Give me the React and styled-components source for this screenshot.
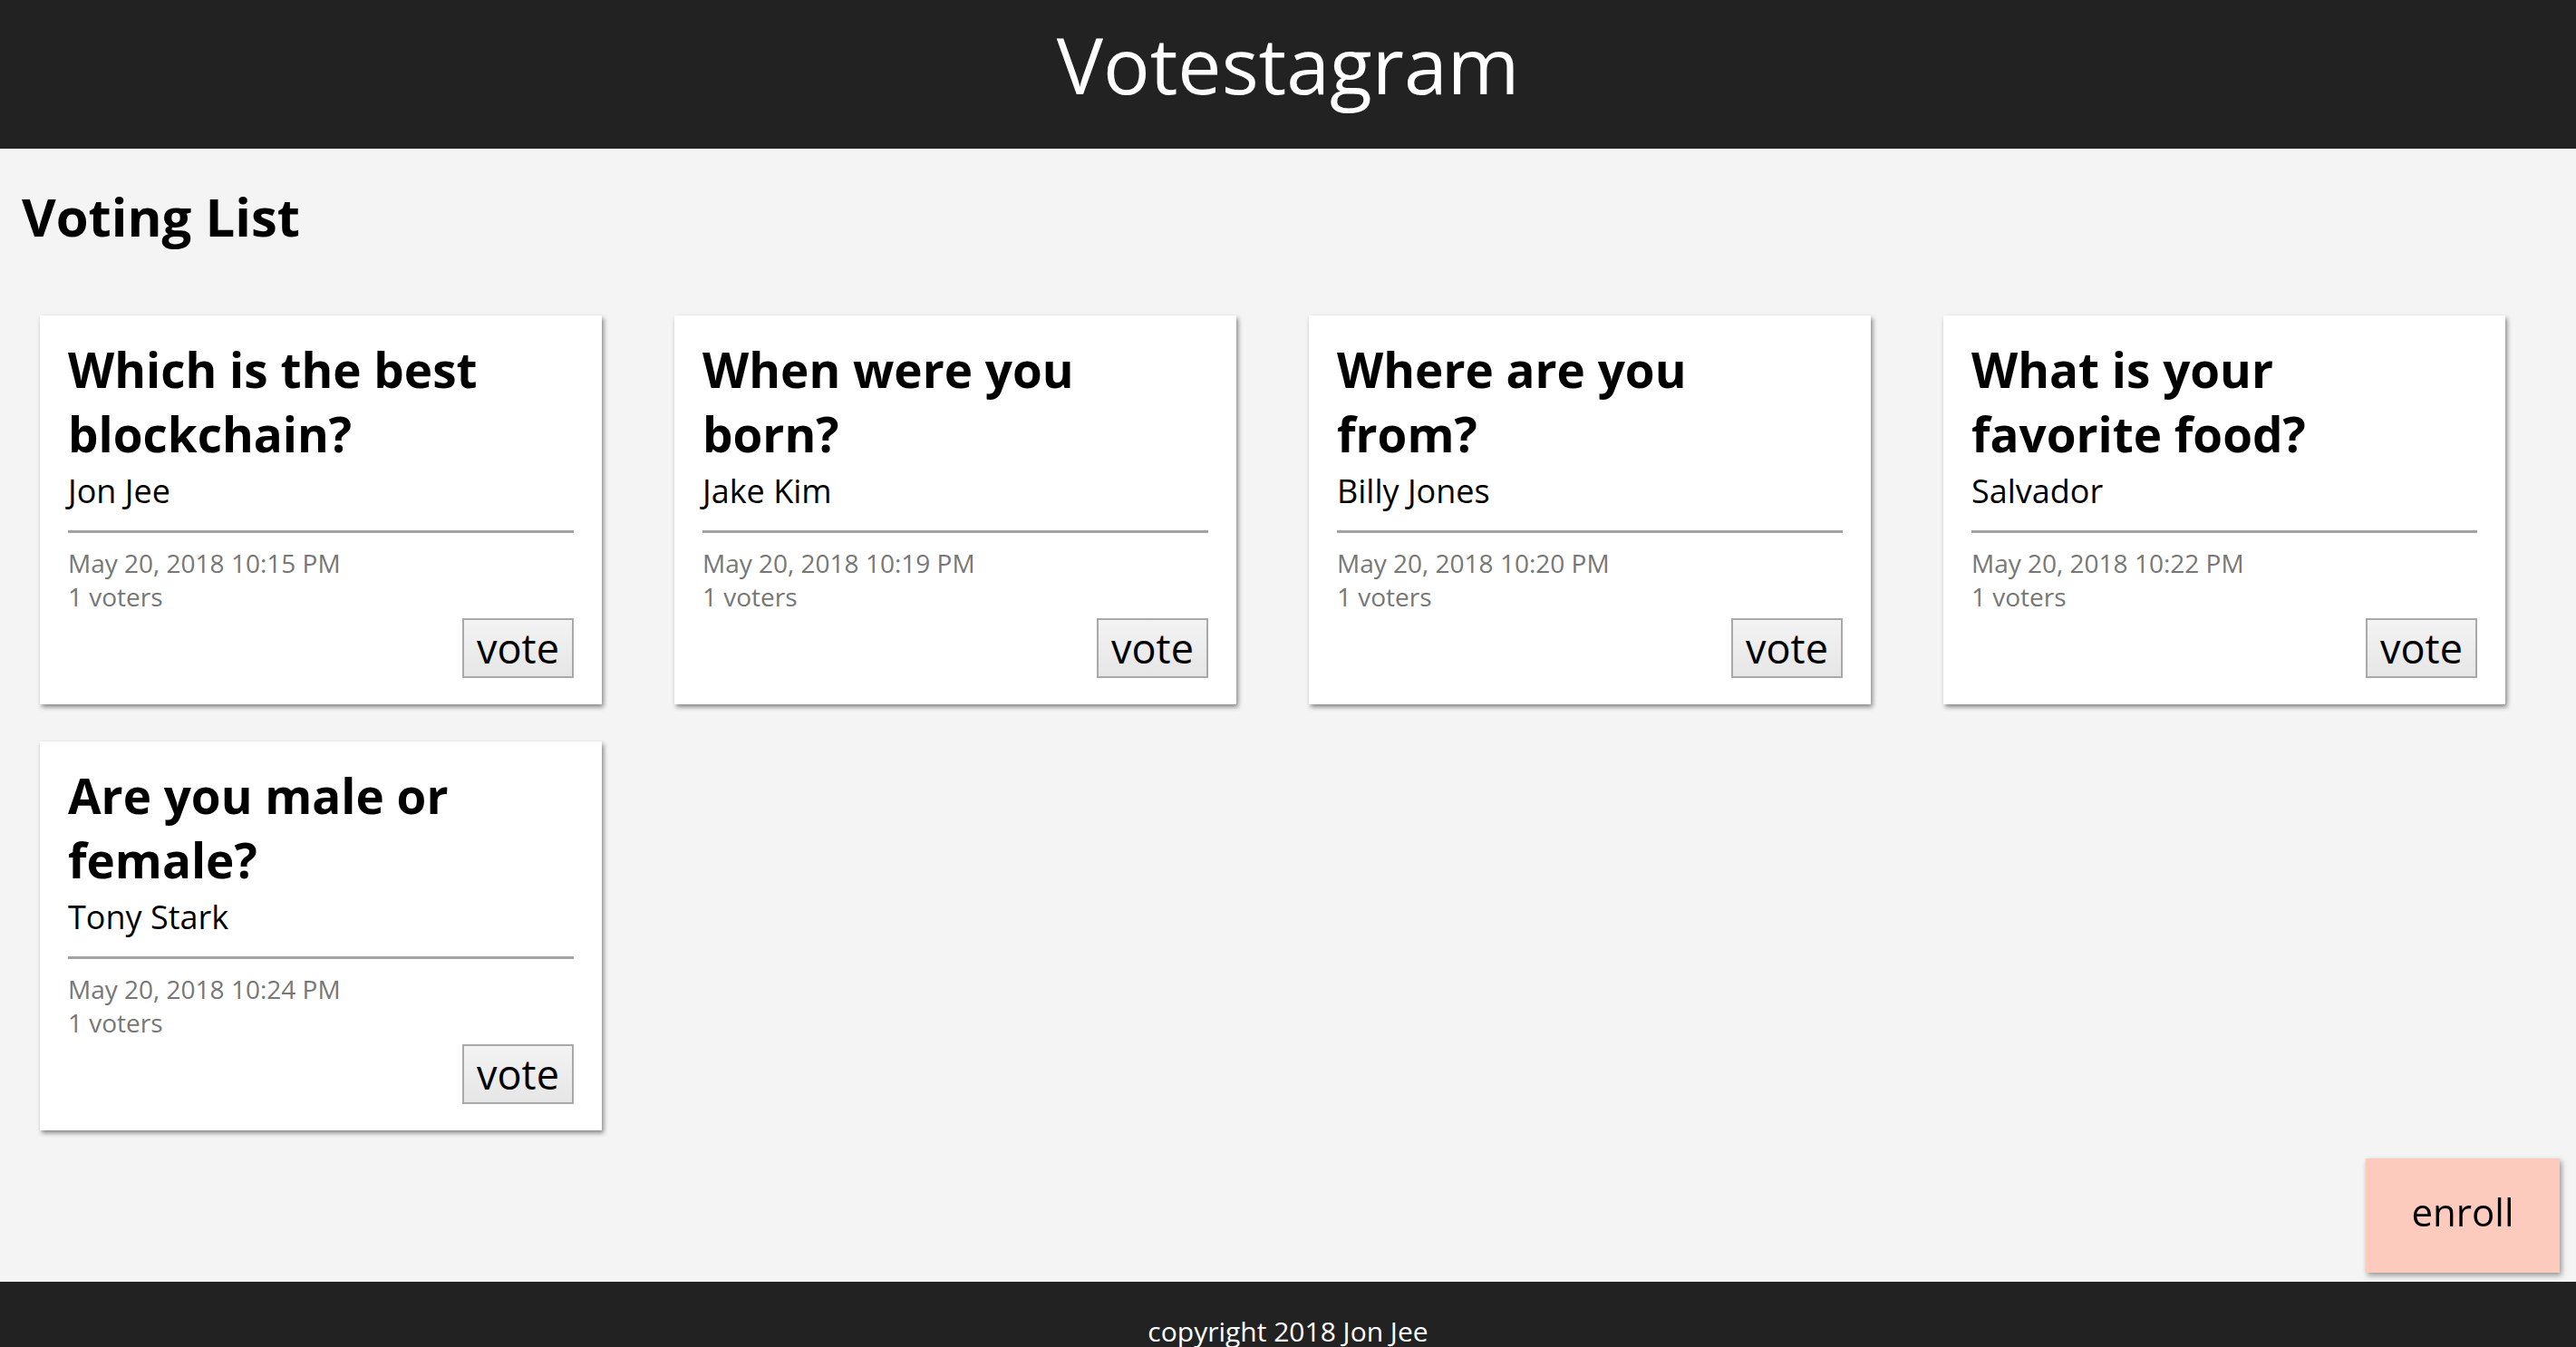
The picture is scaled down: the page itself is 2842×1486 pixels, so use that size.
import React from "react";
import styled, { createGlobalStyle } from "styled-components";

const GlobalStyle = createGlobalStyle`
  html, body {
    margin: 0;
    padding: 0;
    overflow: hidden;
    background: #f4f4f4;
    font-family: "Open Sans", "Noto Sans", "Noto Sans CJK KR", sans-serif;
    color: #000;
  }
  * { box-sizing: border-box; }
`;

const Page = styled.div`
  display: flex;
  flex-direction: column;
  min-height: 100vh;
`;

const Header = styled.header`
  height: 164px;
  background: #222222;
  display: flex;
  justify-content: center;
  align-items: flex-start;
`;

const Brand = styled.div`
  color: #fff;
  font-size: 86px;
  font-weight: 400;
  line-height: 142px;
`;

const Main = styled.main`
  flex: 1;
  min-height: calc(100vh - 164px - 72px);
  padding: 0 24px;
`;

const PageTitle = styled.h1`
  margin: 35px 0 0;
  font-size: 58px;
  font-weight: 700;
  line-height: 80px;
`;

const Grid = styled.div`
  display: grid;
  grid-template-columns: repeat(4, 620px);
  column-gap: 80px;
  row-gap: 41px;
  margin-top: 69px;
  padding-left: 20px;
`;

const Card = styled.article`
  background: #fff;
  padding: 24px 31px 29px;
  box-shadow: 2px 3px 5px rgba(0, 0, 0, 0.45);
  display: flex;
  flex-direction: column;
`;

const Question = styled.h2`
  margin: 0;
  max-width: 500px;
  font-size: 53px;
  font-weight: 700;
  line-height: 71px;
`;

const Author = styled.div`
  margin-top: 6px;
  font-size: 36px;
  line-height: 44px;
`;

const Divider = styled.hr`
  margin: 21px 0 0;
  border: none;
  height: 3px;
  background: #a3a3a3;
`;

const Meta = styled.div`
  margin-top: ${(p) => p.$gap || 0}px;
  font-size: 28px;
  line-height: 37px;
  color: #777;
`;

const Actions = styled.div`
  display: flex;
  justify-content: flex-end;
  margin-top: 5px;
`;

const VoteButton = styled.button`
  height: 66px;
  min-width: 123px;
  padding: 0 14px;
  border: 2px solid #a9a9a9;
  background: linear-gradient(#f3f3f3, #e6e6e6);
  font-family: "Open Sans", "Noto Sans", sans-serif;
  font-size: 45px;
  line-height: 60px;
  color: #000;
  cursor: pointer;
`;

const EnrollButton = styled.button`
  position: fixed;
  right: 18px;
  bottom: 82px;
  width: 214px;
  height: 126px;
  padding: 0 0 10px;
  border: none;
  background: #fccbbd;
  box-shadow: 2px 3px 6px rgba(0, 0, 0, 0.4);
  font-family: "Open Sans", "Noto Sans", sans-serif;
  font-size: 42px;
  color: #000;
  cursor: pointer;
`;

const Footer = styled.footer`
  height: 72px;
  overflow: hidden;
  background: #222222;
  color: #fff;
  text-align: center;
  font-size: 30px;
  line-height: 40px;
  padding-top: 35px;
`;

const votes = [
  { q: "Which is the best blockchain?", author: "Jon Jee", date: "May 20, 2018 10:15 PM", voters: 1 },
  { q: "When were you born?", author: "Jake Kim", date: "May 20, 2018 10:19 PM", voters: 1 },
  { q: "Where are you from?", author: "Billy Jones", date: "May 20, 2018 10:20 PM", voters: 1 },
  { q: "What is your favorite food?", author: "Salvador", date: "May 20, 2018 10:22 PM", voters: 1 },
  { q: "Are you male or female?", author: "Tony Stark", date: "May 20, 2018 10:24 PM", voters: 1 },
];

export default function App() {
  return (
    <>
      <GlobalStyle />
      <Page>
        <Header>
          <Brand>Votestagram</Brand>
        </Header>
        <Main>
          <PageTitle>Voting List</PageTitle>
          <Grid>
            {votes.map((v) => (
              <Card key={v.q}>
                <Question>{v.q}</Question>
                <Author>{v.author}</Author>
                <Divider />
                <Meta $gap={15}>{v.date}</Meta>
                <Meta>{v.voters} voters</Meta>
                <Actions>
                  <VoteButton>vote</VoteButton>
                </Actions>
              </Card>
            ))}
          </Grid>
        </Main>
        <Footer>copyright 2018 Jon Jee</Footer>
        <EnrollButton>enroll</EnrollButton>
      </Page>
    </>
  );
}
